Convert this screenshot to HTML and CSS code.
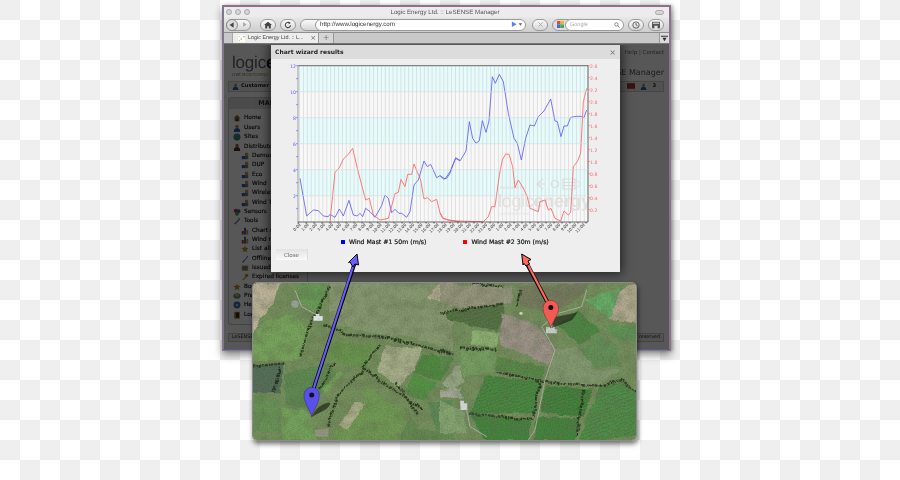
FILE: index.html
```html
<!DOCTYPE html>
<html lang="en">
<head>
<meta charset="utf-8">
<title>Logic Energy Ltd. :: LeSENSE Manager</title>
<link rel="stylesheet" href="styles.css">
</head>
<body>
<svg class="defs" width="0" height="0" aria-hidden="true">
  <symbol id="i-home" viewBox="0 0 10 10"><path d="M1 5 5 1l4 4H8v4H2V5z" fill="#8a6a3a"/><rect x="4" y="6" width="2" height="3" fill="#3b2a12"/></symbol>
  <symbol id="i-user" viewBox="0 0 10 10"><circle cx="5" cy="3" r="2.2" fill="#b98a4a"/><path d="M1 10c0-4 2-5 4-5s4 1 4 5z" fill="#2e62a8"/></symbol>
  <symbol id="i-globe" viewBox="0 0 10 10"><circle cx="5" cy="5" r="4.4" fill="#2d7f9c"/><path d="M2 3l3-1 1 2-2 2-2-1zM6 6l2-1v2l-2 1z" fill="#4f9a3e"/></symbol>
  <symbol id="i-dist" viewBox="0 0 10 10"><circle cx="5" cy="3" r="2.2" fill="#9a6a3a"/><path d="M1 10c0-4 2-5 4-5s4 1 4 5z" fill="#4a3424"/></symbol>
  <symbol id="i-cubes" viewBox="0 0 10 10"><rect x="5" y="1" width="4" height="4" fill="#c79a3a"/><rect x="1" y="5" width="4" height="4" fill="#2e62a8"/><rect x="5" y="5" width="4" height="4" fill="#6a7f8a"/></symbol>
  <symbol id="i-sensor" viewBox="0 0 10 10"><circle cx="3.5" cy="3.5" r="2.5" fill="#b8362e"/><circle cx="7" cy="4" r="2.3" fill="#2e62a8"/><circle cx="5" cy="7.3" r="2.4" fill="#4f9a3e"/></symbol>
  <symbol id="i-tool" viewBox="0 0 10 10"><path d="M1 8.5 6 3.5l1-2.5 2 1-1 2.500-5 5z" fill="#7f8fa8"/></symbol>
  <symbol id="i-chart" viewBox="0 0 10 10"><rect x="1" y="5" width="2.400" height="4.500" fill="#b8362e"/><rect x="3.800" y="1" width="2.400" height="8.500" fill="#2e62a8"/><rect x="6.600" y="3.500" width="2.400" height="6" fill="#c79a3a"/></symbol>
  <symbol id="i-star" viewBox="0 0 10 10"><path d="m5 .5 1.300 3 3.200.3-2.400 2.100.7 3.100L5 7.400 2.200 9l.7-3.100L.5 3.800l3.200-.3z" fill="#b8902e"/></symbol>
  <symbol id="i-plug" viewBox="0 0 10 10"><path d="M1 9 6 4l2-3 1 1-2 2.500L3 9.500z" fill="#3f6ea8"/></symbol>
  <symbol id="i-doc" viewBox="0 0 10 10"><rect x="1" y="2" width="8" height="6.500" fill="#9a9272"/><path d="M2 4h6M2 6h6" stroke="#5a5240" stroke-width=".7"/></symbol>
  <symbol id="i-key" viewBox="0 0 10 10"><circle cx="7" cy="3" r="2.200" fill="#b8902e"/><path d="M6 4 1.500 8.500 2.500 9.500 7 5z" fill="#b8902e"/></symbol>
  <symbol id="i-pref" viewBox="0 0 10 10"><ellipse cx="5" cy="5" rx="4.500" ry="3.500" fill="#6f8a5a"/><ellipse cx="5" cy="4" rx="2.500" ry="1.500" fill="#aab59a"/></symbol>
  <symbol id="i-help" viewBox="0 0 10 10"><circle cx="5" cy="5" r="4.300" fill="#3a6ea8"/><circle cx="5" cy="5" r="1.600" fill="#a8c4e0"/></symbol>
  <symbol id="i-log" viewBox="0 0 10 10"><rect x="1.500" y="1" width="7" height="8.500" fill="#a8843a"/><rect x="3.500" y="2" width="4" height="6.500" fill="#3a2c18"/></symbol>
</svg>

<main class="desktop">

  <section class="browser">
    <div class="browser-frame">
      <header class="titlebar">
        <div class="lights"><i></i><i></i><i></i></div>
        <div class="title">Logic Energy Ltd. :: LeSENSE Manager</div>
        <div class="title-end"><span class="zoomcap"></span></div>
      </header>
      <div class="toolbar">
        <div class="btn btn-nav">
          <span class="nav-back"><svg viewBox="0 0 10 10" width="8" height="8"><path d="M7 1.500v7L2 5z" fill="#444"/></svg></span>
          <span class="nav-fwd"><svg viewBox="0 0 10 10" width="7" height="7"><path d="M3 1.500v7L8 5z" fill="#aaa"/></svg></span>
        </div>
        <div class="btn btn-sq"><svg viewBox="0 0 12 10" width="10" height="8"><path d="M1 5 6 .8 11 5H9.500v4.500H7V6.500H5v3H2.500V5z" fill="#444"/></svg></div>
        <div class="btn btn-sq"><svg viewBox="0 0 10 10" width="8" height="8"><path d="M8.200 5.500A3.300 3.300 0 1 1 7 2.400" fill="none" stroke="#444" stroke-width="1.300"/><path d="M5.800.5 8.500 2.600 5.800 4z" fill="#444"/></svg></div>
        <div class="addr-group">
          <span class="addr-book"></span>
          <div class="addr">
            <span class="addr-url">http://www.logicenergy.com</span>
            <svg viewBox="0 0 14 8" width="12" height="7"><path d="M1 .5v6.500L6.500 3.800z" fill="#5a7fe0"/><path d="M9 2.500h4L11 5.500z" fill="#666"/></svg>
          </div>
        </div>
        <div class="btn btn-sq btn-stop"><svg viewBox="0 0 10 10" width="7" height="7"><path d="m2 2 6 6M8 2 2 8" stroke="#aaa" stroke-width="1.400"/></svg></div>
        <div class="search">
          <span class="search-engine"><svg viewBox="0 0 8 8" width="7" height="7"><rect width="4" height="4" fill="#d94a3a"/><rect x="4" width="4" height="4" fill="#e0b93a"/><rect y="4" width="4" height="4" fill="#3a6ed9"/><rect x="4" y="4" width="4" height="4" fill="#4fa84f"/></svg></span>
          <span class="search-field"><span class="search-text">Google</span><svg viewBox="0 0 10 10" width="6" height="6"><circle cx="4" cy="4" r="2.800" fill="none" stroke="#666" stroke-width="1.200"/><path d="m6 6 3 3" stroke="#666" stroke-width="1.400"/></svg></span>
        </div>
        <div class="btn btn-sq"><svg viewBox="0 0 10 10" width="8" height="8"><circle cx="5" cy="5" r="4" fill="none" stroke="#444" stroke-width="1"/><path d="M5 2.500V5l2 1" fill="none" stroke="#444"/></svg></div>
        <div class="btn btn-sq"><svg viewBox="0 0 12 10" width="10" height="8"><path d="M1 1h10v8H8V6H4v3H1z" fill="#555"/><rect x="2" y="2" width="8" height="1.500" fill="#ddd"/></svg></div>
      </div>
      <div class="tabbar">
        <div class="tab">
          <svg viewBox="0 0 8 8" width="7" height="7"><rect width="8" height="8" fill="#fff"/><path d="M1 1h1v1H1zM6 1h1.500v1.500H6zM3 4h1.500v1.500H3zM1 6h1v1H1z" fill="#8ab83a"/></svg>
          <span class="tab-label">Logic Energy Ltd. :: L...</span>
          <span class="tab-close">×</span>
        </div>
        <div class="tab-new">+</div>
        <div class="tab-more"><svg viewBox="0 0 10 10" width="7" height="7"><path d="M0 1h10v1.500H0zM2 4h6L5 9z" fill="#333"/></svg></div>
      </div>
      <div class="page">
        <div class="page-head">
          <div class="brand">
            <div class="logo">logic<b>e</b></div>
            <div class="tagline"><span>LIVE</span> <em>MONITORING</em></div>
          </div>
          <div class="head-right">
            <div class="head-links">Help | Contact</div>
            <div class="head-app">SE Manager</div>
          </div>
        </div>
        <div class="userbar">
          <svg viewBox="0 0 10 10" width="7" height="7"><use href="#i-user"/></svg>
          <span>Customer</span>
          <span class="userbar-end">
            <svg viewBox="0 0 10 7" width="8" height="6"><rect width="10" height="7" fill="#a33"/></svg>
            <svg viewBox="0 0 10 10" width="7" height="7"><use href="#i-user"/></svg>
            <b>3</b>
          </span>
        </div>
        <div class="page-body">
          <nav class="sidebar">
            <h2 class="side-title">MAIN</h2>
            <ul class="menu">
              <li><svg><use href="#i-home"/></svg>Home</li>
              <li><svg><use href="#i-user"/></svg>Users</li>
              <li><svg><use href="#i-globe"/></svg>Sites</li>
              <li><svg><use href="#i-dist"/></svg>Distributors</li>
              <li class="sub"><svg><use href="#i-cubes"/></svg>Demos</li>
              <li class="sub"><svg><use href="#i-cubes"/></svg>DUP</li>
              <li class="sub"><svg><use href="#i-cubes"/></svg>Eco</li>
              <li class="sub"><svg><use href="#i-cubes"/></svg>Wind</li>
              <li class="sub"><svg><use href="#i-cubes"/></svg>Wireless</li>
              <li class="sub"><svg><use href="#i-cubes"/></svg>Wind Turbines</li>
              <li><svg><use href="#i-sensor"/></svg>Sensors</li>
              <li><svg><use href="#i-tool"/></svg>Tools</li>
              <li class="sub"><svg><use href="#i-chart"/></svg>Chart wizard</li>
              <li class="sub"><svg><use href="#i-chart"/></svg>Wind report</li>
              <li class="sub"><svg><use href="#i-star"/></svg>List all</li>
              <li class="sub"><svg><use href="#i-plug"/></svg>Offline</li>
              <li class="sub"><svg><use href="#i-doc"/></svg>Issued licenses</li>
              <li class="sub"><svg><use href="#i-key"/></svg>Expired licenses</li>
              <li><svg><use href="#i-star"/></svg>Bookmarks</li>
              <li><svg><use href="#i-pref"/></svg>Preferences</li>
              <li><svg><use href="#i-help"/></svg>Help</li>
              <li><svg><use href="#i-log"/></svg>Logout</li>
            </ul>
          </nav>
          <div class="form-peek">
            <div><span>Graph size</span><span>Graph type</span></div>
          </div>
        </div>
        <footer class="page-foot"><span class="foot-box">LeSENSE</span><span class="foot-box">reserved</span></footer>
        <div class="dim"></div>
      </div>
    </div>
  </section>

  <section class="modal">
    <header class="modal-head"><span>Chart wizard results</span><span class="modal-x">×</span></header>
    <div class="modal-body">
      <svg class="chart" viewBox="271 59 349 175" width="349" height="175">
        <defs>
          <pattern id="vlines" x="299" y="0" width="3.9" height="20" patternUnits="userSpaceOnUse"><rect width="1" height="20" fill="#c9c9c9" opacity=".55"/></pattern>
        </defs>
        <rect x="298" y="65.700" width="290" height="156.300" fill="#f8f8f8"/>
        <rect x="298" y="65.700" width="290" height="26" fill="#e6fbfb"/>
        <rect x="298" y="117.700" width="290" height="26" fill="#e6fbfb"/>
        <rect x="298" y="169.700" width="290" height="26" fill="#e6fbfb"/>
        <rect x="298" y="65.700" width="290" height="156.300" fill="url(#vlines)"/>
        <g class="watermark">
          <text x="500" y="189" class="wm-small">Powered by</text>
          <text x="498" y="207" class="wm-big">logic<tspan class="wm-bold">energy</tspan></text>
          <text x="499" y="215" class="wm-tiny">LIVE MONITORING</text>
          <path d="M545 184h-8l6-5m-6 5 6 5" fill="none" stroke="#dcdcdc" stroke-width="1.200"/>
          <circle cx="555" cy="184" r="3.500" fill="none" stroke="#dcdcdc" stroke-width="1.200"/>
          <path d="M563 179h12v10h-12zM563 182.500h12M563 185.500h12M575 179l6 5-6 5" fill="none" stroke="#dcdcdc" stroke-width="1"/>
        </g>
        <g transform="translate(280,55) scale(.33333)">
          <polyline class="line-blue" points="60,370 80,483 100,465 115,467 130,483 145,485 150,478 165,487 178,462 190,483 207,436 220,480 232,483 240,475 248,485 257,460 270,470 285,487 305,452 315,420 325,430 335,473 345,463 357,475 365,475 380,487 390,470 402,390 415,375 432,318 442,335 452,328 470,368 480,362 490,372 500,370 510,355 527,308 540,316"/>
          <polyline class="line-red" points="150,500 165,352 178,338 190,312 205,298 218,280 232,340 245,390 257,435 268,430 280,480 300,495 325,490 345,416 355,412 363,373 375,395 383,358 395,358 402,327 422,375 432,432 442,428 455,440 470,433 480,473 490,490 510,496 540,500"/>
        </g>
        <g transform="translate(440,55) scale(.33333)">
          <polyline class="line-blue" points="0,362 15,372 30,350 47,310 60,318 78,288 88,200 98,250 108,265 118,257 127,197 138,232 147,198 157,65 166,85 178,58 190,80 205,175 222,250 232,265 244,315 257,250 270,210 283,213 295,185 312,168 332,132 345,198 352,200 363,245 372,213 382,213 392,187 410,184 422,184 432,188 440,165"/>
          <polyline class="line-red" points="0,475 8,490 25,495 50,498 130,500 145,485 155,455 165,455 178,360 187,315 197,297 207,298 218,335 225,398 235,375 250,400 262,425 270,460 295,470 300,440 315,435 325,465 333,460 345,490 362,498 372,468 385,480 392,472 400,335 412,320 422,295 430,140 440,100"/>
        </g>
        <path class="axis" d="M298 65.700H588V222H298"/>
        <path class="axis-l" d="M298 65.700V222"/>
        <path class="grid" d="M298 91.700H588M298 117.700H588M298 143.700H588M298 169.700H588M298 195.700H588"/>
        <path class="ticks-l" d="M296 65.700h2M296 78.700h2M296 91.700h2M296 104.700h2M296 117.700h2M296 130.700h2M296 143.700h2M296 156.700h2M296 169.700h2M296 182.700h2M296 195.700h2M296 208.700h2"/>
        <path class="ticks-r" d="M588 65.700h2M588 77.700h2M588 89.700h2M588 101.700h2M588 113.700h2M588 125.700h2M588 137.700h2M588 149.700h2M588 161.700h2M588 173.700h2M588 185.700h2M588 197.700h2M588 209.700h2"/>
        <path class="ticks-b" d="M298 222v1.500M306 222v1.500M314 222v1.500M322 222v1.500M330 222v1.500M338 222v1.500M346 222v1.500M354 222v1.500M362 222v1.500M370 222v1.500M378 222v1.500M386 222v1.500M394 222v1.500M402 222v1.500M410 222v1.500M418 222v1.500M426 222v1.500M434 222v1.500M442 222v1.500M450 222v1.500M458 222v1.500M466 222v1.500M474 222v1.500M482 222v1.500M490 222v1.500M498 222v1.500M506 222v1.500M514 222v1.500M522 222v1.500M530 222v1.500M538 222v1.500M546 222v1.500M554 222v1.500M562 222v1.500M570 222v1.500M578 222v1.500M586 222v1.500"/>
        <g class="ylab-l">
          <text x="296" y="67.500">12</text><text x="296" y="93.500">10</text><text x="296" y="119.500">8</text><text x="296" y="145.500">6</text><text x="296" y="171.500">4</text><text x="296" y="197.500">2</text>
        </g>
        <g class="ylab-r">
          <text x="590" y="67.500">2.6</text><text x="590" y="79.500">2.4</text><text x="590" y="91.500">2.2</text><text x="590" y="103.500">2.0</text><text x="590" y="115.500">1.8</text><text x="590" y="127.500">1.6</text><text x="590" y="139.500">1.4</text><text x="590" y="151.500">1.2</text><text x="590" y="163.500">1.0</text><text x="590" y="175.500">0.8</text><text x="590" y="187.500">0.6</text><text x="590" y="199.500">0.4</text><text x="590" y="211.500">0.2</text>
        </g>
        <g class="xlab">
          <text transform="translate(301,225) rotate(-45)">0:00</text>
          <text transform="translate(309.100,225) rotate(-45)">1:00</text>
          <text transform="translate(317.200,225) rotate(-45)">2:00</text>
          <text transform="translate(325.300,225) rotate(-45)">3:00</text>
          <text transform="translate(333.400,225) rotate(-45)">4:00</text>
          <text transform="translate(341.600,225) rotate(-45)">5:00</text>
          <text transform="translate(349.700,225) rotate(-45)">6:00</text>
          <text transform="translate(357.800,225) rotate(-45)">7:00</text>
          <text transform="translate(365.900,225) rotate(-45)">8:00</text>
          <text transform="translate(374,225) rotate(-45)">9:00</text>
          <text transform="translate(382.100,225) rotate(-45)">10:00</text>
          <text transform="translate(390.200,225) rotate(-45)">11:00</text>
          <text transform="translate(398.300,225) rotate(-45)">12:00</text>
          <text transform="translate(406.400,225) rotate(-45)">13:00</text>
          <text transform="translate(414.500,225) rotate(-45)">14:00</text>
          <text transform="translate(422.700,225) rotate(-45)">15:00</text>
          <text transform="translate(430.800,225) rotate(-45)">16:00</text>
          <text transform="translate(438.900,225) rotate(-45)">17:00</text>
          <text transform="translate(447,225) rotate(-45)">18:00</text>
          <text transform="translate(455.100,225) rotate(-45)">19:00</text>
          <text transform="translate(463.200,225) rotate(-45)">20:00</text>
          <text transform="translate(471.300,225) rotate(-45)">21:00</text>
          <text transform="translate(479.400,225) rotate(-45)">22:00</text>
          <text transform="translate(487.500,225) rotate(-45)">23:00</text>
          <text transform="translate(495.600,225) rotate(-45)">0:00</text>
          <text transform="translate(503.800,225) rotate(-45)">1:00</text>
          <text transform="translate(511.900,225) rotate(-45)">2:00</text>
          <text transform="translate(520,225) rotate(-45)">3:00</text>
          <text transform="translate(528.100,225) rotate(-45)">4:00</text>
          <text transform="translate(536.200,225) rotate(-45)">5:00</text>
          <text transform="translate(544.300,225) rotate(-45)">6:00</text>
          <text transform="translate(552.400,225) rotate(-45)">7:00</text>
          <text transform="translate(560.500,225) rotate(-45)">8:00</text>
          <text transform="translate(568.600,225) rotate(-45)">9:00</text>
          <text transform="translate(576.700,225) rotate(-45)">10:00</text>
          <text transform="translate(584.900,225) rotate(-45)">11:00</text>
        </g>
      </svg>
      <div class="legend">
        <div class="legend-item"><i class="swatch swatch-blue"></i>Wind Mast #1 50m (m/s)</div>
        <div class="legend-item"><i class="swatch swatch-red"></i>Wind Mast #2 30m (m/s)</div>
      </div>
      <button class="close-btn" type="button">Close</button>
    </div>
  </section>

  <section class="map">
    <svg viewBox="252 282 385 159" width="385" height="159">
      <defs>
        <filter id="grain" x="0" y="0" width="100%" height="100%">
          <feTurbulence type="fractalNoise" baseFrequency=".7" numOctaves="2" seed="4"/>
          <feColorMatrix values="0 0 0 0 0  0 0 0 0 0  0 0 0 0 0  1.800 0 0 0 -.65"/>
        </filter>
        <filter id="mottle" x="0" y="0" width="100%" height="100%">
          <feTurbulence type="fractalNoise" baseFrequency=".09" numOctaves="3" seed="11"/>
          <feColorMatrix values="0 0 0 0 .12  0 0 0 0 .16  0 0 0 0 .08  2.400 0 0 0 -.95"/>
        </filter>
        <filter id="rough" x="-5%" y="-5%" width="110%" height="110%">
          <feTurbulence type="fractalNoise" baseFrequency=".12" numOctaves="2" seed="7" result="n"/>
          <feDisplacementMap in="SourceGraphic" in2="n" scale="5" xChannelSelector="R" yChannelSelector="G"/>
          <feGaussianBlur stdDeviation=".45"/>
        </filter>
        <pattern id="stripes" width="10" height="10" patternUnits="userSpaceOnUse" patternTransform="rotate(70)"><rect width="3" height="10" fill="#1f4a1c" opacity=".2"/></pattern>
      </defs>
      <rect x="252" y="282" width="385" height="159" fill="#76905e"/>
      <g filter="url(#rough)">
      <g transform="translate(250,270) scale(.33333)">
        <path fill="#bdb399" d="M0 40h90l-20 60-40 50-30 60z"/>
        <path fill="#78a35d" d="M40 160l90-30 50 60-30 80-150 5v-65z"/>
        <path fill="#6a9a58" d="M140 40h90l-10 70-30 15-40-35z"/>
        <path fill="#87996f" d="M240 40h330l40 90v110l-130-40-120-10-120-30z"/>
        <path fill="#bbae97" d="M530 80l40-40h40v70z"/>
        <path fill="#6a9450" d="M240 215l145 10-40 75-45-15-80-20z"/>
        <path fill="#a8af8a" d="M410 225l110 10-30 65-45 50-65-50z"/>
        <path fill="#508a40" d="M520 250l90 15-40 70-80-30z"/>
        <path fill="#569247" d="M495 310l65 30-40 55-55-30z"/>
        <path fill="#5f8a58" d="M610 390l-80 5 30 85 50 10z"/>
        <path fill="#618b52" d="M105 310l135-30 20 30-80 115-75-25z"/>
        <path fill="#77a25d" d="M265 305l15 5-50 60-15-10z"/>
        <path fill="#56705a" d="M0 290l100-10-10 90H0z"/>
        <path fill="#699358" d="M0 375l90 15v100l-90-10z"/>
        <path fill="#75a25c" d="M95 410l85 20 20 80H95z"/>
        <path fill="#729a54" d="M345 350l125 80-30 80H250l10-30 80-80z"/>
        <path fill="#aeb18a" d="M315 395l30 5-50 80-30-10z"/>
        <path fill="#658a52" d="M450 510l30-75 30 45 100 10v20z"/>
      </g>
      <g transform="translate(440,270) scale(.33333)">
        <path fill="#96967d" d="M0 40l220 10-5 45-105 25L0 100z"/>
        <path fill="#587546" d="M15 130l175-30 5 45-25 40-140-35z"/>
        <path fill="#787d61" d="M240 50l210-10-20 30-50 40-80 10-60-10z"/>
        <path fill="#68ae68" d="M430 90l110-35-30 95-30-30z"/>
        <path fill="#b3ab91" d="M540 60l50-20v120l-80-10z"/>
        <path fill="#9d9387" d="M185 130l105 35 55 75-20 45-145-60z"/>
        <path fill="#90b374" d="M100 180l80 10-10 45-80-10z"/>
        <path fill="#4f8845" d="M355 165l60-45 65 65-60 40z"/>
        <path fill="#66905a" d="M415 250l60-60 55 35 10 65h-70z"/>
        <path fill="#649458" d="M490 165h100v50l-60-5z"/>
        <path fill="#5a8949" d="M175 260l140 30-5 40-140-30z"/>
        <path fill="#84996f" d="M340 240l70-10 60 70h70l-70 50-150-10z"/>
        <path fill="#779f62" d="M60 240h110l-5 65-95 15z"/>
        <path fill="#5d8a50" d="M0 260l40-5-40 55z"/>
        <path fill="#96a584" d="M5 340l55-60 10 60-40 20z"/>
        <path fill="#4d8a44" d="M140 315l165 20-25 95H90z"/>
        <path fill="#47843f" d="M315 345l145 15-30 80-130-10z"/>
        <path fill="#46843f" d="M90 430l180 20v60H130z"/>
        <path fill="#47843f" d="M290 440l130 5-15 65H280z"/>
        <path fill="#558f4c" d="M480 350l65-15 45 35v125l-100 15h-70l20-70z"/>
        <path fill="#85a572" d="M0 390l70 35 10 65H0z"/>
        <path fill="#a5ab95" d="M0 360l60-5 10 30-70-5z"/>
        <path fill="url(#stripes)" d="M15 130l175-30 5 45-25 40-140-35z"/>
        <path fill="url(#stripes)" d="M140 315l165 20-25 95H90z"/>
        <path fill="url(#stripes)" d="M315 345l145 15-30 80-130-10z"/>
        <path fill="url(#stripes)" d="M480 350l65-15 45 35v125l-100 15h-70l20-70z"/>
      </g>
      <g class="hedges">
        <g transform="translate(250,270) scale(.33333)">
          <path d="M220 165l80 30 120 10 180 45M390 225l-50 65 60 50 120 80M340 300l-80 80-25 90M0 290l100-10M240 50l-60 110-30 100M90 290l-20 80M250 280l-40 80M440 340l60 90"/>
        </g>
        <g transform="translate(440,270) scale(.33333)">
          <path d="M0 130l190-30M100 40l90 10M170 240l-110-5M170 305l140 30M305 335l170 15 70-20 45 35M430 360l-20 140M90 430l190 20M0 240l40 10M300 340l-20 100M240 60l-10 50"/>
        </g>
      </g>
      </g>
      <rect class="mottle" x="252" y="282" width="385" height="159" filter="url(#mottle)"/>
      <g transform="translate(250,270) scale(.33333)">
        <path class="track" d="M135 60l20 50 45 25"/>
        <circle cx="135" cy="102" r="11" fill="#98a398"/>
        <path d="M190 138h8v-6h10v6h10v14h-28z" fill="#dfe6e6"/>
        <path d="M195 480l40-5v25h-40z" fill="#97977f"/>
      </g>
      <g transform="translate(440,270) scale(.33333)">
        <path class="track" d="M440 60l-15 50-70 20-50 40 40 70-30 90-30 150-20 30"/>
        <path class="track" d="M80 420l10 50 50 30"/>
        <path d="M318 172h14v-6h12v12h6v12h-32z" fill="#c9cfcf"/>
        <path d="M60 392h12v8h10v20H62z" fill="#d4d8d8"/>
        <rect x="0" y="365" width="36" height="16" fill="#a8a898"/>
        <circle cx="243" cy="130" r="5" fill="#d0d0c0"/>
      </g>
      <rect class="grain" x="252" y="282" width="385" height="159" filter="url(#grain)"/>
    </svg>
  </section>

  <svg class="overlay" viewBox="0 0 900 480" width="900" height="480">
    <path d="M311.500 395 355 262" class="arrow-edge"/>
    <path d="M549.500 306 526 262" class="arrow-edge"/>
    <path d="M311.500 395 354.500 262" class="arrow-blue"/>
    <path d="M549.500 306 526.500 262" class="arrow-red"/>
    <path d="M357 254 358.500 265 355 264 353 267 350 262 348.500 262.500z" class="head-blue"/>
    <path d="M521.700 254 531 259.500 528 261 529.500 264 526 266 524 263.500 523 265z" class="head-red"/>
    <path d="M311.500 417 C315 409 321 404 329 402.500 C332 403.500 328 409 321 412z" class="pin-shadow"/>
    <path d="M551.500 328 555 317 570 314 578 312 572 320 560 325z" class="pin-shadow"/>
    <path d="M311.700 416.700c-1.500-7-7.700-13-7.700-21.700a7.700 7.700 0 0 1 15.400 0c0 8.700-6.200 14.700-7.700 21.700z" class="pin-blue"/>
    <circle cx="311.700" cy="395" r="2.500" class="pin-dot"/>
    <path d="M550.800 328c-1.500-7-7.700-12-7.700-20a7.700 7.700 0 0 1 15.400 0c0 8-6.200 13-7.700 20z" class="pin-red"/>
    <circle cx="550.800" cy="307.500" r="2.500" class="pin-dot"/>
  </svg>
</main>
</body>
</html>
```

FILE: styles.css
```css
* { box-sizing: border-box; }
html, body { margin: 0; padding: 0; }
body { width: 900px; height: 480px; overflow: hidden; background: #fff; }
.defs { position: absolute; }

.desktop {
  position: relative;
  width: 900px;
  height: 480px;
  overflow: hidden;
  background-color: #fff;
  background-image: conic-gradient(#efefef 25%, #fff 0 50%, #efefef 0 75%, #fff 0);
  background-size: 40px 40px;
  background-position: 20px 0;
  filter: blur(.35px);
  font-family: "DejaVu Sans", sans-serif;
  text-rendering: geometricPrecision;
}

/* Browser window */
.browser {
  position: absolute;
  left: 222px;
  top: 5px;
  width: 449px;
  height: 346px;
  border: 1.500px solid #7d7d7d;
  box-shadow: 0 4px 8px rgba(0, 0, 0, .45), 2px 0 3px rgba(0, 0, 0, .2);
}
.browser-frame {
  display: flex;
  flex-direction: column;
  height: 100%;
  border: 1px solid #a0649c;
  border-bottom-color: #5d5590;
  border-left-color: #86709a;
  background: #e4e4e4;
}
.titlebar {
  display: flex;
  align-items: center;
  height: 10px;
  padding: 0 5px 0 2px;
  background: #ececec;
}
.lights { display: flex; gap: 3px; flex: 1; }
.lights i {
  width: 6px;
  height: 6px;
  border-radius: 50%;
  background: #d6d6d6;
  border: 1px solid #a8a8a8;
}
.title {
  font: 6.200px "Liberation Sans", sans-serif;
  color: #555;
}
.title-end { flex: 1; display: flex; justify-content: flex-end; }
.zoomcap {
  width: 9px;
  height: 5px;
  border: 1px solid #a8a8a8;
  border-radius: 3px;
  background: #d6d6d6;
}
.toolbar {
  display: flex;
  align-items: center;
  gap: 4px;
  height: 16px;
  padding: 0 3px 0 2px;
  background: linear-gradient(#e8e8e8, #cdcdcd);
  border-bottom: 1px solid #8e8e8e;
}
.btn {
  display: flex;
  align-items: center;
  justify-content: center;
  height: 12px;
  border: 1px solid #9a9a9a;
  border-radius: 6px;
  background: linear-gradient(#fafafa, #d6d6d6);
}
.btn-nav { width: 25px; margin-right: 5px; justify-content: flex-start; }
.nav-back {
  display: flex;
  align-items: center;
  justify-content: center;
  width: 12px;
  height: 12px;
  margin-left: -1px;
  border-radius: 50%;
  border: 1px solid #8a8a8a;
  background: #dcdcdc;
}
.nav-fwd { display: flex; width: 12px; justify-content: center; }
.btn-sq { width: 16px; flex: none; }
.btn-stop { margin-left: 1px; }
.addr-group { display: flex; flex: none; width: 226px; height: 12px; margin-right: 1px; }
.addr-book {
  width: 21px;
  margin-right: -6px;
  border: 1px solid #9a9a9a;
  border-radius: 6px 0 0 6px;
  background: linear-gradient(#fafafa, #d6d6d6);
}
.addr {
  display: flex;
  align-items: center;
  justify-content: space-between;
  flex: 1;
  padding: 0 2px 0 4px;
  background: #fff;
  border: 1px solid #9a9a9a;
  border-radius: 6px;
}
.addr-url { font: 6.200px "Liberation Sans", sans-serif; color: #333; }
.search { display: flex; flex: none; width: 72px; height: 12px; align-items: center; }
.search-engine {
  display: flex;
  align-items: center;
  justify-content: center;
  width: 17px;
  height: 12px;
  margin-right: -4px;
  border: 1px solid #9a9a9a;
  border-radius: 6px 0 0 6px;
  background: #dedede;
}
.search-field {
  display: flex;
  align-items: center;
  justify-content: space-between;
  flex: 1;
  height: 12px;
  padding: 0 3px 0 4px;
  background: #fff;
  border: 1px solid #9a9a9a;
  border-radius: 6px;
}
.search-text { font: 5.500px "Liberation Sans", sans-serif; color: #aaa; }
.tabbar {
  display: flex;
  align-items: stretch;
  height: 11px;
  padding-left: 8px;
  background: #c8c8c8;
  border-bottom: 1px solid #777;
}
.tab {
  display: flex;
  align-items: center;
  gap: 3px;
  width: 87px;
  padding: 0 2px 0 5px;
  background: #ededed;
  border-right: 1px solid #999;
  border-left: 1px solid #aaa;
}
.tab-label { font: 5.400px "Liberation Sans", sans-serif; color: #444; white-space: nowrap; flex: 1; }
.tab-close { font: 7px/1 "DejaVu Sans", sans-serif; color: #666; }
.tab-new {
  width: 15px;
  font: 8px/10px "DejaVu Sans", sans-serif;
  color: #777;
  text-align: center;
  background: #d6d6d6;
  border-right: 1px solid #999;
}
.tab-more {
  display: flex;
  align-items: center;
  justify-content: center;
  width: 10px;
  margin-left: auto;
  background: #dcdcdc;
  border-left: 1px solid #999;
}

/* Dimmed page behind the modal */
.page {
  position: relative;
  flex: 1;
  display: flex;
  flex-direction: column;
  padding: 0 5px 0 4px;
  background: #fff;
  overflow: hidden;
}
.page-head { display: flex; justify-content: space-between; height: 36.500px; flex: none; }
.brand { padding: 10px 0 0 4px; }
.logo { font: 17px/18px "Liberation Sans", sans-serif; color: #666; letter-spacing: -.2px; }
.logo b { color: #222; }
.tagline { font: 4px/6px "DejaVu Sans", sans-serif; color: #3a6e9a; }
.tagline em { font-style: normal; color: #8a9a3a; }
.head-right { text-align: right; padding: 4.500px 0 0 0; }
.head-links { font: 5.500px/8px "DejaVu Sans", sans-serif; color: #666; }
.head-app { margin-top: 11px; font: 8px/10px "DejaVu Sans", sans-serif; color: #555; }
.userbar {
  display: flex;
  align-items: center;
  gap: 2px;
  height: 11px;
  flex: none;
  padding: 0 7px 0 3px;
  font: bold 5.200px "DejaVu Sans", sans-serif;
  color: #222;
  background: #ececec;
  border: 1px solid #ccc;
}
.userbar-end { display: flex; align-items: center; gap: 5px; margin-left: auto; }
.page-body { flex: 1; display: flex; gap: 10px; padding-top: 5.500px; }
.sidebar {
  width: 80px;
  height: 228px;
  border: 1px solid #c8c8c8;
  border-radius: 3px;
  padding: 0 0 0 4px;
}
.side-title {
  margin: 0 0 0 -4px;
  height: 11px;
  font: bold 6.500px/11px "DejaVu Sans", sans-serif;
  color: #333;
  text-align: center;
  background: #dcdcdc;
}
.menu { list-style: none; margin: 4.800px 0 0; padding: 0; }
.menu li {
  display: flex;
  align-items: center;
  gap: 2px;
  height: 9.350px;
  font: 5.800px "DejaVu Sans", sans-serif;
  -webkit-text-stroke: .1px #000;
  white-space: nowrap;
  color: #000;
}
.menu li.sub { padding-left: 8px; }
.menu svg { width: 8px; height: 8px; flex: none; margin-right: 1px; }
.form-peek { flex: 1; padding: 215px 0 0 40px; }
.form-peek div { display: flex; gap: 32px; font: 5.500px "DejaVu Sans", sans-serif; color: #333; }
.page-foot {
  display: flex;
  justify-content: space-between;
  height: 9px;
  flex: none;
  margin-bottom: 7.500px;
  font: 4.800px/7px "DejaVu Sans", sans-serif;
  color: #222;
}
.foot-box { padding: 0 3px; border: 1px solid #c8c8c8; background: #eee; }
.dim { position: absolute; inset: 0; background: rgba(0, 0, 0, .66); }

/* Modal */
.modal {
  position: absolute;
  left: 271px;
  top: 45px;
  width: 349px;
  height: 227px;
  background: #eeeeee;
  box-shadow: 0 0 10px 2px rgba(0, 0, 0, .6);
  clip-path: inset(0 -20px -20px -20px);
}
.modal-head {
  display: flex;
  align-items: center;
  justify-content: space-between;
  height: 14px;
  padding: 0 4px;
  font: bold 6px "DejaVu Sans", sans-serif;
  color: #222;
  background: #dcdcdc;
}
.modal-x { font-size: 8px; font-weight: normal; color: #777; }
.modal-body { display: flex; flex-direction: column; }
.chart { display: block; }
.line-blue, .line-red { fill: none; stroke-width: .85; vector-effect: non-scaling-stroke; stroke-linejoin: round; }
.line-blue { stroke: #6060ff; }
.line-red { stroke: #ff6464; }
.axis { fill: none; stroke: #444; stroke-width: .8; }
.axis-l { stroke: #888; stroke-width: .8; }
.grid { stroke: #cfe0e0; stroke-width: .6; }
.ticks-l { stroke: #6a6aff; stroke-width: .7; }
.ticks-r { stroke: #ff6a6a; stroke-width: .7; }
.ticks-b { stroke: #333; stroke-width: .8; }
.ylab-l text { font: 4.600px "DejaVu Sans", sans-serif; fill: #5a5aff; text-anchor: end; }
.ylab-r text { font: 4.600px "DejaVu Sans", sans-serif; fill: #ff6a6a; }
.xlab text { font: 3.900px "DejaVu Sans", sans-serif; fill: #333; text-anchor: end; }
.watermark text { font-family: "Liberation Sans", sans-serif; fill: #e0e0e0; }
.wm-small { font-size: 4.500px; font-weight: bold; }
.wm-big { font-size: 18px; letter-spacing: -.3px; }
.wm-bold { font-weight: bold; }
.wm-tiny { font-size: 3.500px; }
.legend {
  display: flex;
  gap: 37px;
  height: 14px;
  padding-left: 70px;
  margin-top: 1px;
  align-items: center;
}
.legend-item {
  display: flex;
  align-items: center;
  gap: 4px;
  font: 6.200px "DejaVu Sans", sans-serif;
  color: #111;
  -webkit-text-stroke: .2px #111;
  white-space: nowrap;
}
.swatch { width: 4px; height: 4px; }
.swatch-blue { background: #0000ff; }
.swatch-red { background: #ff0000; }
.close-btn {
  align-self: flex-start;
  width: 32px;
  height: 11px;
  margin: 0 0 0 5px;
  padding: 0;
  border: 0;
  border-right: 1px solid #ddd;
  font: 5.500px "DejaVu Sans", sans-serif;
  color: #666;
  background: linear-gradient(#e2e2e2, #fafafa);
}

/* Satellite map */
.map {
  position: absolute;
  left: 252px;
  top: 282px;
  width: 385px;
  height: 159px;
  overflow: hidden;
  border-radius: 5px;
  border: 1.500px solid #8a8a8a;
  box-shadow: 1px 3px 5px rgba(0, 0, 0, .55);
}
.map svg { display: block; margin: -1.500px; }
.hedges path {
  fill: none;
  stroke: #1f2c18;
  stroke-width: 7;
  stroke-dasharray: 5 2 9 3;
  opacity: .85;
}
.track { fill: none; stroke: #aab2a6; stroke-width: 3; }
.mottle { opacity: .35; }
.grain { opacity: .14; }

/* Arrows and pins over the map */
.overlay { position: absolute; left: 0; top: 0; }
.arrow-edge { fill: none; stroke: #000; stroke-width: 3.800; }
.arrow-blue { fill: none; stroke: #6a5cff; stroke-width: 2.200; }
.arrow-red { fill: none; stroke: #ff6a5e; stroke-width: 2.200; }
.head-blue { fill: #6a5cff; stroke: #000; stroke-width: 1; }
.head-red { fill: #ff6a5e; stroke: #000; stroke-width: 1; }
.pin-blue { fill: #5a50f0; stroke: #111; stroke-width: .3; }
.pin-red { fill: #f45a52; stroke: #111; stroke-width: .3; }
.pin-dot { fill: #111; }
.pin-shadow { fill: rgba(20, 25, 15, .6); }
```
